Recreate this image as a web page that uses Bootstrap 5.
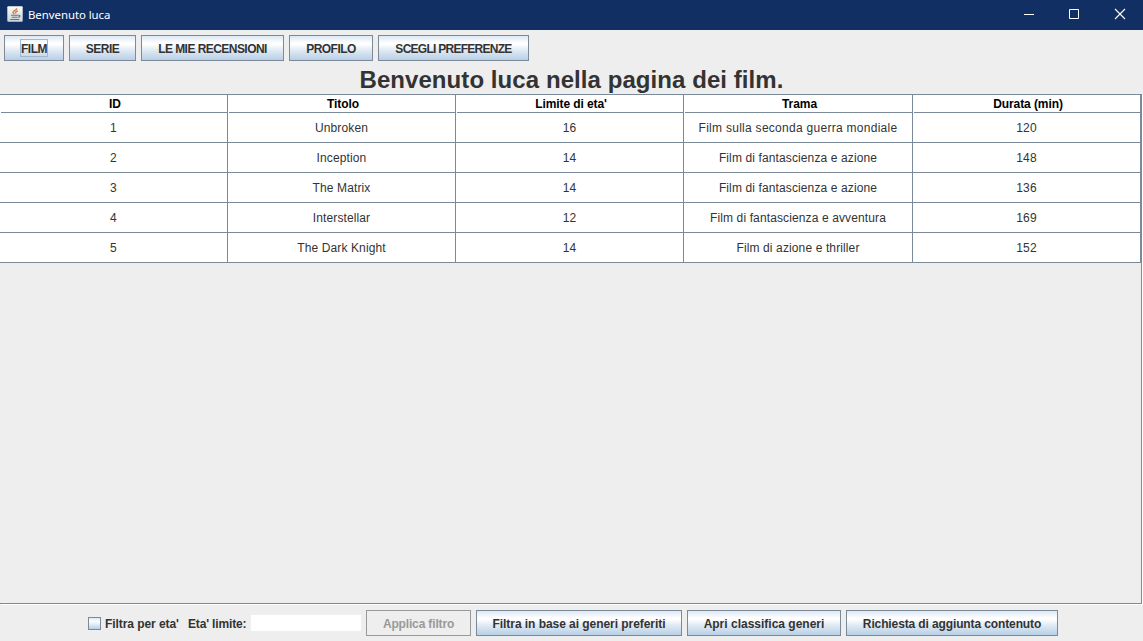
<!DOCTYPE html>
<html lang="it">
<head>
<meta charset="utf-8">
<title>Benvenuto luca</title>
<link href="https://cdn.jsdelivr.net/npm/bootstrap@5.3.0/dist/css/bootstrap.min.css" rel="stylesheet">
<style>
body{height:641px;background:#eee;color:#333;font:12px/14px "Liberation Sans",Arial,sans-serif;overflow:hidden}
.titlebar{height:30px;background:#122f63;color:#fff;font:11.4px/30px "Noto Sans","Open Sans",sans-serif;padding-left:7px}
.titlebar .caption{margin-left:5px;letter-spacing:-.04px}
.winctl{width:46px;height:30px}
.toolbar{gap:5px;padding:5px 4px 0;height:36px}
.metal{--bs-btn-border-radius:0;--bs-btn-padding-x:0;--bs-btn-padding-y:0;--bs-btn-font-size:12px;--bs-btn-font-weight:700;--bs-btn-line-height:14px;--bs-btn-color:#333;--bs-btn-border-color:#7a8a99;--bs-btn-hover-color:#333;--bs-btn-hover-border-color:#7a8a99;--bs-btn-disabled-color:#999;--bs-btn-disabled-border-color:#999;--bs-btn-disabled-opacity:1;
height:26px;padding-top:2px;white-space:nowrap;flex:none;background:linear-gradient(#dde8f3,#fff 30%,#fff 34%,#dde8f3 62%,#b8cfe5)}
.metal:disabled{background:#eee}
.caps{letter-spacing:-.55px}
.w-film{width:60px;padding-top:0}.w-serie{width:67px}.w-rec{width:143px}.w-prof{width:84px}.w-pref{width:151px;letter-spacing:-.73px}
.w-app{width:105px;letter-spacing:-.15px}.w-gen{width:206px;letter-spacing:-.05px}.w-cla{width:154px}.w-ric{width:212px;letter-spacing:-.12px}
.focusbox{display:inline-block;height:18px;line-height:18px;border:1px solid #a3b8cc;padding:0;width:28px;margin:0 -1px;vertical-align:middle}
.heading{height:28px;font:bold 24px/28px "Liberation Sans",Arial,sans-serif;letter-spacing:.07px}
.pane{height:510px;border:solid #7a8a99;border-width:0 1px 1px 0;margin-right:1px;box-shadow:1px 1px 0 #fff}
.films{width:1141px;table-layout:fixed;border-collapse:separate;border-spacing:0;background:#fff;text-align:center;letter-spacing:.12px}
.films th{height:19px;padding:0 0 0 3px;border-top:1px solid #7a8a99;border-right:1px solid #7a8a99;line-height:17px;color:#000;font-weight:700;letter-spacing:-.08px;background:linear-gradient(#7a8a99,#7a8a99) 1px 100%/100% 1px no-repeat #fff;text-align:center}
.films td{height:30px;padding:2px 0 0;border:solid #7a8a99;border-width:0 1px 1px 0;line-height:27px}
.films .wide{letter-spacing:.28px}
.filters{height:37px;padding:6px 0 0 88px}
.box{appearance:none;width:13px;height:13px;border:1px solid #7a8a99;background:linear-gradient(#dde8f3,#fff 30%,#dde8f3 65%,#b8cfe5);margin:0 4px 0 0;border-radius:0}
.age{width:110px;height:16px;border:0;background:#fff;margin:0 5px 0 5px;border-radius:0;padding:0}
.lbl-eta{margin-left:9px;width:58px;letter-spacing:-.15px}
.lbl-filter{width:74px;letter-spacing:-.07px}
.filters label{padding-top:1px}
</style>
<script src="https://cdn.jsdelivr.net/npm/bootstrap@5.3.0/dist/js/bootstrap.bundle.min.js"></script>
</head>
<body class="d-flex flex-column m-0">
<header class="titlebar d-flex align-items-center flex-shrink-0">
  <svg width="16" height="16" viewBox="0 0 16 16" style="margin-top:-2px"><defs><linearGradient id="tile" x2="0" y2="1"><stop stop-color="#fafafa"/><stop offset="1" stop-color="#cfd3d6"/></linearGradient></defs><rect x=".3" y=".3" width="15.4" height="15.4" rx="1" fill="url(#tile)"/><path d="M9.800 2.200C10 4.500 5.500 4.800 6 6.500c.2.800 1.200 1.100 1.600 1.700M11 4.800C8.700 5.400 7.900 6.100 9.200 7.400" fill="none" stroke="#e8792b" stroke-width="1.300"/><path d="M4 9.300h7.200M4.800 11.300h5.700M3.200 13.500h9M11.400 9.300c2.400-.3 2 2-.5 2" fill="none" stroke="#55798f" stroke-width="1.100"/></svg>
  <span class="caption">Benvenuto luca</span>
  <div class="d-flex ms-auto">
    <svg class="winctl" viewBox="0 0 46 30"><path d="M19 14.500h10" stroke="#fff"/></svg>
    <svg class="winctl" viewBox="0 0 46 30"><path d="M18.500 9.500h9v9h-9z" stroke="#fff" fill="none"/></svg>
    <svg class="winctl" viewBox="0 0 46 30"><path d="M18 9l10 10M28 9L18 19" stroke="#fff" stroke-width="1.100"/></svg>
  </div>
</header>
<nav class="toolbar d-flex flex-shrink-0">
  <button class="btn metal caps w-film"><span class="focusbox">FILM</span></button>
  <button class="btn metal caps w-serie">SERIE</button>
  <button class="btn metal caps w-rec">LE MIE RECENSIONI</button>
  <button class="btn metal caps w-prof">PROFILO</button>
  <button class="btn metal caps w-pref">SCEGLI PREFERENZE</button>
</nav>
<h1 class="heading text-center m-0 flex-shrink-0">Benvenuto luca nella pagina dei film.</h1>
<main class="pane flex-shrink-0">
  <table class="films">
    <colgroup><col style="width:228px"><col style="width:228px"><col style="width:228px"><col style="width:229px"><col style="width:228px"></colgroup>
    <thead><tr><th>ID</th><th>Titolo</th><th>Limite di eta'</th><th>Trama</th><th>Durata (min)</th></tr></thead>
    <tbody>
      <tr><td>1</td><td>Unbroken</td><td>16</td><td class="wide">Film sulla seconda guerra mondiale</td><td>120</td></tr>
      <tr><td>2</td><td>Inception</td><td>14</td><td>Film di fantascienza e azione</td><td>148</td></tr>
      <tr><td>3</td><td>The Matrix</td><td>14</td><td>Film di fantascienza e azione</td><td>136</td></tr>
      <tr><td>4</td><td>Interstellar</td><td>12</td><td>Film di fantascienza e avventura</td><td>169</td></tr>
      <tr><td>5</td><td>The Dark Knight</td><td>14</td><td>Film di azione e thriller</td><td>152</td></tr>
    </tbody>
  </table>
</main>
<footer class="filters d-flex flex-shrink-0">
  <div class="d-flex align-items-center fw-bold text-nowrap" style="height:26px">
    <input class="box" type="checkbox" id="byAge"><label class="lbl-filter" for="byAge">Filtra per eta'</label>
    <label class="lbl-eta" for="age">Eta' limite:</label><input class="age" id="age" type="text">
  </div>
  <div class="d-flex" style="gap:5px">
    <button class="btn metal w-app" disabled>Applica filtro</button>
    <button class="btn metal w-gen">Filtra in base ai generi preferiti</button>
    <button class="btn metal w-cla">Apri classifica generi</button>
    <button class="btn metal w-ric">Richiesta di aggiunta contenuto</button>
  </div>
</footer>
</body>
</html>
